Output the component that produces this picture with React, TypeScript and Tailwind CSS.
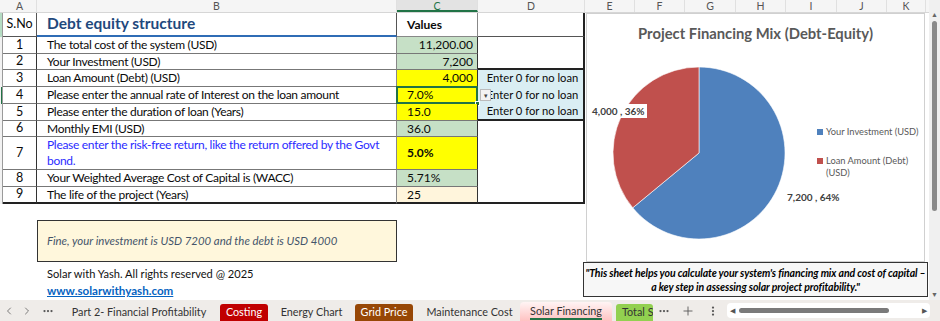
import { ChevronLeft, ChevronRight, MoreHorizontal, Plus, MoreVertical } from 'lucide-react';

const cols = [
  { l: 'A', w: 'w-[34px]' },
  { l: 'B', w: 'w-[360px]' },
  { l: 'C', w: 'w-[81px]' },
  { l: 'D', w: 'w-[107px]' },
  { l: 'E', w: 'w-[50px]' },
  { l: 'F', w: 'w-[50px]' },
  { l: 'G', w: 'w-[51px]' },
  { l: 'H', w: 'w-[50px]' },
  { l: 'I', w: 'w-[51px]' },
  { l: 'J', w: 'w-[50px]' },
  { l: 'K', w: 'w-[39px]' },
];

type Row = {
  n: string;
  label: string;
  value: string;
  bg: string;
  align: 'l' | 'r';
  blue?: boolean;
  bold?: boolean;
};

const rows: Row[] = [
  { n: '1', label: 'The total cost of the system (USD)', value: '11,200.00', bg: 'bg-[#c6e0c6]', align: 'r' },
  { n: '2', label: 'Your Investment (USD)', value: '7,200', bg: 'bg-[#c6e0c6]', align: 'r' },
  { n: '3', label: 'Loan Amount (Debt) (USD)', value: '4,000', bg: 'bg-[#ffff00]', align: 'r' },
  { n: '4', label: 'Please enter the annual rate of Interest on the loan amount', value: '7.0%', bg: 'bg-[#ffff00]', align: 'l' },
  { n: '5', label: 'Please enter the duration of loan (Years)', value: '15.0', bg: 'bg-[#ffff00]', align: 'l' },
  { n: '6', label: 'Monthly EMI (USD)', value: '36.0', bg: 'bg-[#c6e0c6]', align: 'l' },
  { n: '7', label: 'Please enter the risk-free return, like the return offered by the Govt bond.', value: '5.0%', bg: 'bg-[#ffff00]', align: 'l', blue: true, bold: true },
  { n: '8', label: 'Your Weighted Average Cost of Capital is (WACC)', value: '5.71%', bg: 'bg-[#c6e0c6]', align: 'l' },
  { n: '9', label: 'The life of the project (Years)', value: '25', bg: 'bg-[#fff5dc]', align: 'l' },
];

function Table() {
  return (
    <div className="grid grid-cols-[3px_34px_360px_81px_107px] grid-rows-[24px_17px_16px_17px_17px_17px_16px_33px_17px_17px] text-[12px] text-[#0a0a0a]">
      {/* row header sliver */}
      <div className="row-span-10 bg-[#f2f2f2] border-r border-[#9a9a9a] flex flex-col">
        <div className="h-[24px] bg-[#b5dcc3]" />
        <div className="h-[50px]" />
        <div className="h-[17px] bg-[#217346] w-[1px] ml-[1px]" />
      </div>
      {/* header row */}
      <div className="border-r border-b border-[#555] flex items-center justify-center text-[12.5px]">S.No</div>
      <div className="border-b-2 border-[#2f6cb5] border-r border-r-[#555] flex items-center pl-[10px] text-[15.5px] font-bold text-[#1f497d]">
        Debt equity structure
      </div>
      <div className="border-r border-b border-[#888] flex items-center pl-[10px] font-bold">Values</div>
      <div className="border-r-2 border-r-[#222] border-b border-b-[#555]" />
      {rows.map((r, i) => (
        <Cells key={r.n} r={r} i={i} />
      ))}
    </div>
  );
}

function Cells({ r, i }: { r: Row; i: number }) {
  const last = i === rows.length - 1;
  const bb = last ? 'border-b-2 border-b-[#222]' : 'border-b border-b-[#777]';
  return (
    <>
      <div className={`${bb} border-r border-r-[#333] flex items-center justify-center text-[12.5px]`}>{r.n}</div>
      <div
        className={`${bb} border-r border-r-[#888] flex items-center pl-[10px] pr-[2px] text-[12px] tracking-[-0.3px] leading-[16px] ${
          r.blue ? 'text-[#2b2bff]' : ''
        }`}
      >
        {r.label}
      </div>
      <div
        className={`${bb} border-r border-r-[#333] ${r.bg} relative flex items-center ${
          r.align === 'r' ? 'justify-end pr-[4px]' : 'pl-[10px]'
        } ${r.bold ? 'font-bold' : ''}`}
      >
        {r.value}
        {i === 3 && (
          <>
            <div className="absolute -inset-[1px] border-2 border-[#217346]" />
            <div className="absolute -right-[3px] -bottom-[3px] w-[5px] h-[5px] bg-[#217346] border border-white" />
            <div className="absolute -right-[14px] top-[2px] w-[11px] h-[12px] bg-[#f3f3f3] border border-[#bbb] flex items-center justify-center text-[7px] text-[#444] z-10">
              ▾
            </div>
          </>
        )}
      </div>
      {i === 0 && <div className="row-span-2 border-r-2 border-b-2 border-[#222] bg-white" />}
      {i >= 2 && i <= 4 && (
        <div
          className={`bg-[#daeef3] border-r-2 border-r-[#222] text-[11.2px] ${
            i === 4 ? 'border-b-2 border-b-[#222]' : ''
          } flex items-center justify-center pl-[4px]`}
        >
          Enter 0 for no loan
        </div>
      )}
      {i === 5 && <div className="row-span-4 border-r-2 border-b-2 border-[#222] bg-white" />}
    </>
  );
}

function Chart() {
  const cx = 112;
  const cy = 139;
  const r = 86;
  const a = (230.4 * Math.PI) / 180;
  const px = cx + r * Math.sin(a);
  const py = cy - r * Math.cos(a);
  return (
    <div className="w-[339px] h-[249px] ml-[1px] border border-[#d0d0d0] bg-white relative">
      <div className="text-center text-[14.8px] font-bold text-[#595959] mt-[8px]">
        Project Financing Mix (Debt-Equity)
      </div>
      <svg className="absolute left-0 top-0" width="339" height="249">
        <path d={`M${cx},${cy} L${cx},${cy - r} A${r},${r} 0 1,1 ${px},${py} Z`} fill="#4f81bd" stroke="#fff" strokeWidth="0.6" />
        <path d={`M${cx},${cy} L${px},${py} A${r},${r} 0 0,1 ${cx},${cy - r} Z`} fill="#c0504d" stroke="#fff" strokeWidth="0.6" />
      </svg>
      <div className="absolute left-[3px] top-[90px] bg-white px-[2px] text-[10px] font-bold text-[#404040] leading-[14px] whitespace-nowrap">
        4,000 , 36%
      </div>
      <div className="absolute left-[200px] top-[176px] text-[10px] font-bold text-[#404040] leading-[14px] whitespace-nowrap">
        7,200 , 64%
      </div>
      <div className="absolute left-[230px] top-[112px] text-[9.3px] text-[#595959] leading-[12px] flex flex-col gap-[17px] whitespace-nowrap">
        <div className="flex items-center gap-[3px]">
          <span className="w-[6px] h-[6px] bg-[#4f81bd]" />
          Your Investment (USD)
        </div>
        <div className="flex items-start gap-[3px]">
          <span className="w-[6px] h-[6px] bg-[#c0504d] mt-[3px]" />
          <span>
            Loan Amount (Debt)
            <br />
            (USD)
          </span>
        </div>
      </div>
    </div>
  );
}

const tabs = [
  { t: 'Part 2- Financial Profitability', w: 'w-[150px]', cls: 'text-[#333]' },
  { t: 'Costing', w: 'w-[48px] ml-[6px]', cls: 'bg-[#c00000] text-white' },
  { t: 'Energy Chart', w: 'w-[87px]', cls: 'text-[#333]' },
  { t: 'Grid Price', w: 'w-[58px]', cls: 'bg-[#974706] text-white' },
  { t: 'Maintenance Cost', w: 'w-[107px] pl-[6px]', cls: 'text-[#333]' },
];

export default function App() {
  return (
    <div className="w-[940px] h-[321px] overflow-hidden bg-white [font-family:Lato,sans-serif] flex flex-col">
      <div className="flex h-[300px]">
        <div className="w-[929px] flex flex-col">
          {/* column headers */}
          <div className="h-[13px] flex bg-[#f5f5f5] border-b border-[#d6d6d6] text-[10.5px] text-[#555] leading-[13px] overflow-hidden">
            <div className="w-[3px] shrink-0" />
            {cols.map((c) => (
              <div
                key={c.l}
                className={`${c.w} shrink-0 text-center border-r border-[#e0e0e0] ${
                  c.l === 'C' ? 'text-[#217346] bg-[#e3e3e3] border-b-2 border-b-[#217346]' : ''
                }`}
              >
                {c.l}
              </div>
            ))}
          </div>
          <div className="flex flex-1">
            <div className="w-[585px] shrink-0 flex flex-col">
              <Table />
              <div className="h-[16px]" />
              <div className="ml-[37px] w-[360px] h-[42px] bg-[#fff7dc] border-[1.5px] border-[#333] flex items-center pl-[9px] italic text-[11.4px] text-[#44546a]">
                Fine, your investment is USD 7200 and the debt is USD 4000
              </div>
              <div className="ml-[47px] mt-[3px] text-[11.1px] text-[#111] leading-[17px]">
                Solar with Yash. All rights reserved @ 2025
              </div>
              <div className="ml-[47px] text-[11.6px] font-bold text-[#0563c1] underline leading-[17px]">
                www.solarwithyash.com
              </div>
            </div>
            <div className="flex flex-col">
              <Chart />
              <div className="w-[345px] h-[35px] -ml-[2px] border-[1.5px] border-[#333] bg-[#f7f7f7] flex flex-col items-center justify-center text-[10.5px] font-bold italic text-black leading-[14px] tracking-[-0.1px] whitespace-nowrap overflow-hidden">
                <div>"This sheet helps you calculate your system's financing mix and cost of capital –</div>
                <div>a key step in assessing solar project profitability."</div>
              </div>
            </div>
          </div>
        </div>
        {/* vertical scrollbar */}
        <div className="w-[11px] bg-[#f0f0f0] flex flex-col items-center pt-[11px] pb-[2px]">
          <div className="text-[7px] leading-[7px] text-[#666]">▲</div>
          <div className="w-[5px] h-[190px] mt-[3px] rounded-full bg-[#8a8a8a]" />
          <div className="flex-1" />
          <div className="text-[7px] leading-[7px] text-[#666]">▼</div>
        </div>
      </div>
      {/* sheet tabs */}
      <div className="h-[21px] bg-[#efece9] flex items-end text-[10.8px] text-[#333] whitespace-nowrap">
        <div className="w-[64px] shrink-0 flex items-center h-[21px] text-[#555]">
          <div className="w-[17px] flex justify-center">
            <ChevronLeft size={12} strokeWidth={1.5} />
          </div>
          <div className="w-[20px] flex justify-center">
            <ChevronRight size={12} strokeWidth={1.5} />
          </div>
          <div className="w-[22px] flex justify-center">
            <MoreHorizontal size={12} strokeWidth={2.5} />
          </div>
        </div>
        {tabs.map((t) => (
          <div key={t.t} className={`${t.w} shrink-0 flex items-end h-[21px]`}>
            <div className={`h-[17px] w-full rounded-t-[3px] flex items-center justify-center ${t.cls}`}>{t.t}</div>
          </div>
        ))}
        <div className="w-[92px] shrink-0 h-[19px] rounded-t-[4px] bg-gradient-to-b from-[#fff4f4] to-[#ffc2c2] flex items-center justify-center">
          <span className="border-b-2 border-[#217346] leading-[14px]">Solar Financing</span>
        </div>
        <div className="h-[17px] w-[37px] shrink-0 ml-[4px] pl-[6px] bg-[#92d050] rounded-t-[3px] overflow-hidden flex items-center">
          Total Savings
        </div>
        <div className="flex items-center h-[21px] text-[#555] shrink-0">
          <div className="w-[22px] flex justify-center">
            <MoreHorizontal size={12} strokeWidth={2.5} />
          </div>
          <div className="w-[25px] flex justify-center">
            <Plus size={14} strokeWidth={1.5} />
          </div>
          <div className="w-[25px] flex justify-center">
            <MoreVertical size={12} strokeWidth={2.5} />
          </div>
        </div>
        <div className="ml-[2px] mb-[3px] w-[203px] shrink-0 h-[15px] bg-white rounded-[4px] flex items-center px-[3px] gap-[4px]">
          <span className="text-[7px] text-[#555]">◀</span>
          <div className="w-[150px] h-[5px] rounded-full bg-[#7a7a7a]" />
          <div className="flex-1" />
          <span className="text-[7px] text-[#555]">▶</span>
        </div>
      </div>
    </div>
  );
}
